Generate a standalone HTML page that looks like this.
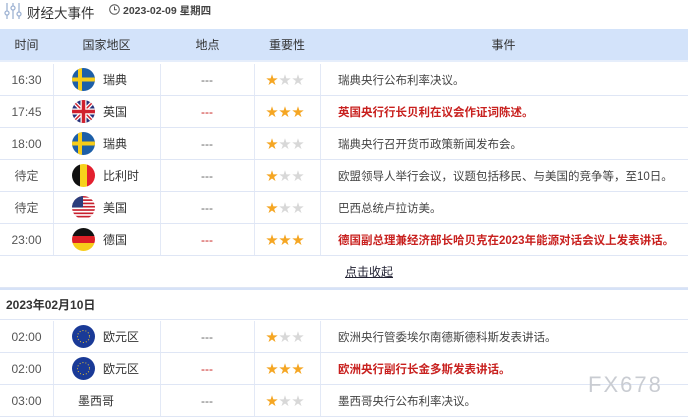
<!DOCTYPE html><html><head><meta charset="utf-8"><style>
*{margin:0;padding:0;box-sizing:border-box}
body{width:688px;height:414px;overflow:hidden;background:#fff;font-family:"Liberation Sans","Noto Sans CJK SC",sans-serif;font-size:12px;color:#333;position:relative}
.a{position:absolute}
.hd{top:29px;left:0;width:688px;height:33px;background:#d3e3fa;border-bottom:2px solid #e6eefb}
.row{position:absolute;left:0;width:688px;height:32px;border-bottom:1px solid #dfe6f5}
.c{position:absolute;top:0;height:100%;display:flex;align-items:center;justify-content:center}
.vl{position:absolute;top:0;height:100%;width:1px;background:#e3e9f6}
.fl{position:absolute;left:72px;top:4px;width:23px;height:23px;border-radius:50%;overflow:hidden}
.cn{position:absolute;left:103px;top:0;height:100%;display:flex;align-items:center}
.st{position:absolute;left:266px;top:0;height:100%;display:flex;align-items:center;font-size:12px;letter-spacing:1px}
.o{color:#f5a623}.g{color:#d8d8d8}
.ev{position:absolute;left:338px;top:0;height:100%;display:flex;align-items:center;font-size:11.5px;color:#444}
.r{color:#c8201e;font-weight:bold}
</style></head><body>
<svg class="a" style="left:3px;top:2px" width="20" height="18" viewBox="0 0 20 18" fill="none" stroke="#9fb3d3" stroke-width="1.3"><line x1="4" y1="1" x2="4" y2="17"/><line x1="10" y1="1" x2="10" y2="17"/><line x1="16" y1="1" x2="16" y2="17"/><circle cx="4" cy="11" r="2" fill="#fff"/><circle cx="10" cy="6" r="2" fill="#fff"/><circle cx="16" cy="12" r="2" fill="#fff"/></svg>
<div class="a" style="left:27px;top:2px;font-size:13.5px;color:#333">财经大事件</div>
<svg class="a" style="left:109px;top:4px" width="11" height="11" viewBox="0 0 11 11" fill="none" stroke="#555"><circle cx="5.5" cy="5.5" r="4.8"/><path d="M5.5 2.5V5.8H7.8"/></svg>
<div class="a" style="left:123px;top:3px;font-size:10.5px;font-weight:bold;color:#444">2023-02-09 星期四</div>
<div class="a hd">
<div class="c" style="left:0;width:53px">时间</div>
<div class="c" style="left:53px;width:107px">国家地区</div>
<div class="c" style="left:160px;width:95px">地点</div>
<div class="c" style="left:255px;width:64px">重要性</div>
<div class="c" style="left:319px;width:369px">事件</div>
</div>
<div id="rows"></div>
<div class="row" style="top:256px;height:32px"><div class="c" style="left:319px;width:100px;text-decoration:underline;color:#223">点击收起</div></div>
<div class="row" style="top:288px;height:32px;border-top:2px solid #d6e2f7"><div class="c" style="left:6px;font-weight:bold;color:#333">2023年02月10日</div></div>
<script>
const SE='<svg width="23" height="23" viewBox="0 0 23 23"><rect width="23" height="23" fill="#1d5fa8"/><rect x="6" width="4" height="23" fill="#f6cd1a"/><rect y="9.5" width="23" height="4" fill="#f6cd1a"/></svg>';
const GB='<svg width="23" height="23" viewBox="0 0 23 23"><rect width="23" height="23" fill="#26307a"/><path d="M0 0L23 23M23 0L0 23" stroke="#fff" stroke-width="4"/><path d="M0 0L23 23M23 0L0 23" stroke="#d0202e" stroke-width="1.5"/><path d="M11.5 0V23M0 11.5H23" stroke="#fff" stroke-width="6"/><path d="M11.5 0V23M0 11.5H23" stroke="#d0202e" stroke-width="3.5"/></svg>';
const BE='<svg width="23" height="23"><rect width="8" height="23" fill="#111"/><rect x="8" width="7" height="23" fill="#f7d21b"/><rect x="15" width="8" height="23" fill="#e3202e"/></svg>';
let us='<svg width="23" height="23"><rect width="23" height="23" fill="#fff"/>';for(let i=0;i<7;i++)us+=`<rect y="${i*3.3}" width="23" height="1.65" fill="#c8202e"/>`;us+='<rect width="11" height="11.5" fill="#2b3d7c"/></svg>';
const DE='<svg width="23" height="23"><rect width="23" height="8" fill="#111"/><rect y="8" width="23" height="7" fill="#dd1f26"/><rect y="15" width="23" height="8" fill="#f7cd1a"/></svg>';
const EU='<svg width="23" height="23"><rect width="23" height="23" fill="#1a3a97"/><circle cx="11.5" cy="11.5" r="6" fill="none" stroke="#e8c030" stroke-width="1" stroke-dasharray="1 2"/></svg>';
const d=[
[64,'16:30',SE,'瑞典',1,'瑞典央行公布利率决议。'],
[96,'17:45',GB,'英国',3,'英国央行行长贝利在议会作证词陈述。'],
[128,'18:00',SE,'瑞典',1,'瑞典央行召开货币政策新闻发布会。'],
[160,'待定',BE,'比利时',1,'欧盟领导人举行会议，议题包括移民、与美国的竞争等，至10日。'],
[192,'待定',us,'美国',1,'巴西总统卢拉访美。'],
[224,'23:00',DE,'德国',3,'德国副总理兼经济部长哈贝克在2023年能源对话会议上发表讲话。'],
[321,'02:00',EU,'欧元区',1,'欧洲央行管委埃尔南德斯德科斯发表讲话。'],
[353,'02:00',EU,'欧元区',3,'欧洲央行副行长金多斯发表讲话。'],
[385,'03:00',null,'墨西哥',1,'墨西哥央行公布利率决议。']];
let h='';
for(const [t,tm,f,cn,s,ev] of d){const r=s==3;
h+=`<div class="row" style="top:${t}px"><div class="vl" style="left:53px"></div><div class="vl" style="left:160px"></div><div class="vl" style="left:254px"></div><div class="vl" style="left:320px"></div>
<div class="c" style="left:0;width:53px;color:#555">${tm}</div>
${f?`<div class="fl">${f}</div>`:''}<div class="cn" style="${f?'':'left:78px'}">${cn}</div>
<div class="c" style="left:160px;width:94px;color:${r?'#c8201e':'#666'}">---</div>
<div class="st">${'<span class="o">★</span>'.repeat(s)}${'<span class="g">★</span>'.repeat(3-s)}</div>
<div class="ev${r?' r':''}">${ev}</div></div>`;}
document.getElementById('rows').innerHTML=h;
</script>
<div class="a" style="left:588px;top:372px;font-size:22px;color:#c9ccd2;letter-spacing:2px">FX678</div>
</body></html>
